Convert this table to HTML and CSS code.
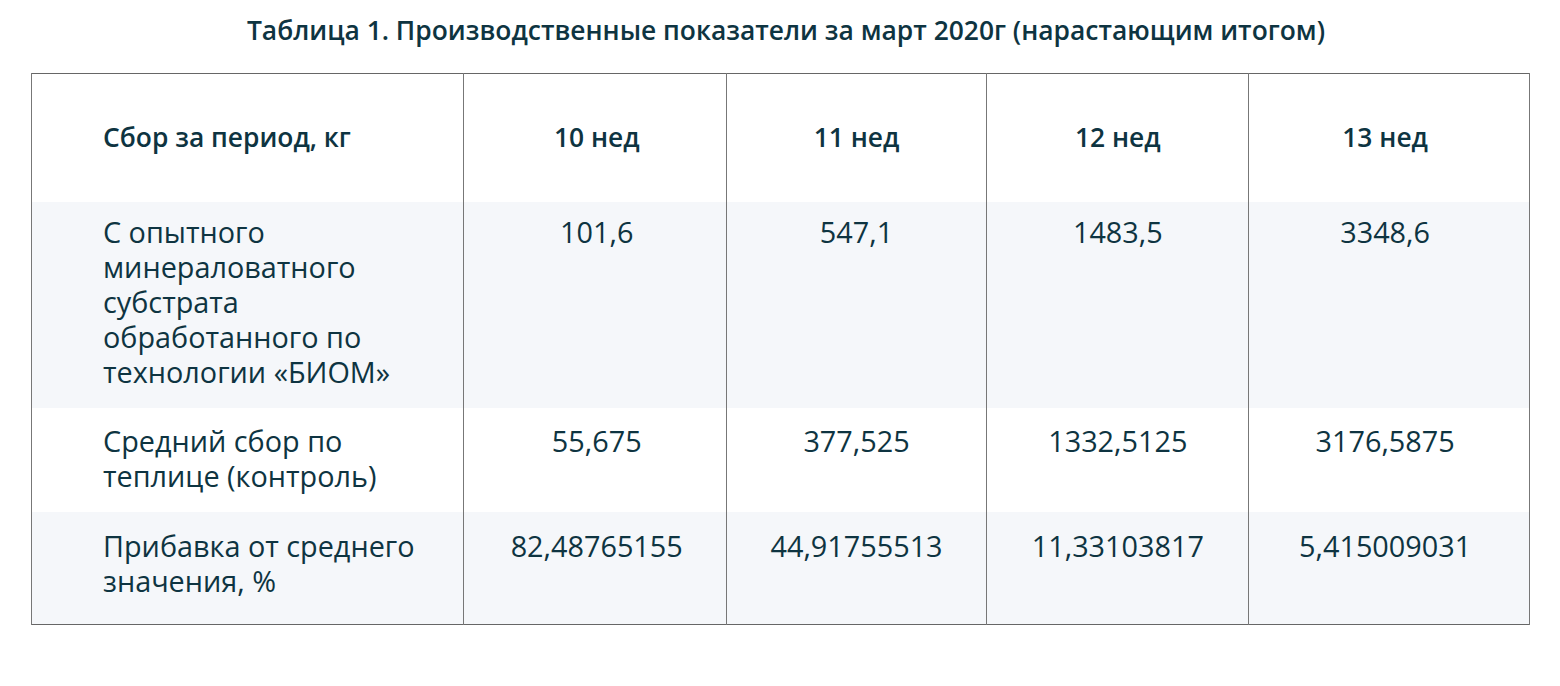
FILE: index.html
```html
<!DOCTYPE html>
<html lang="ru">
<head>
<meta charset="utf-8">
<title>Таблица 1</title>
<link rel="stylesheet" href="styles.css">
</head>
<body>
<div class="page">
  <h2 class="caption">Таблица 1. Производственные показатели за март 2020г (нарастающим итогом)</h2>
  <table class="data">
    <colgroup>
      <col class="c-label">
      <col class="c-10">
      <col class="c-11">
      <col class="c-12">
      <col class="c-13">
    </colgroup>
    <thead>
      <tr>
        <th class="label">Сбор за период, кг</th>
        <th>10 нед</th>
        <th>11 нед</th>
        <th>12 нед</th>
        <th>13 нед</th>
      </tr>
    </thead>
    <tbody>
      <tr class="alt first">
        <td class="label">С опытного минераловатного субстрата обработанного по технологии «БИОМ»</td>
        <td>101,6</td>
        <td>547,1</td>
        <td>1483,5</td>
        <td>3348,6</td>
      </tr>
      <tr class="middle">
        <td class="label">Средний сбор по теплице (контроль)</td>
        <td>55,675</td>
        <td>377,525</td>
        <td>1332,5125</td>
        <td>3176,5875</td>
      </tr>
      <tr class="alt last">
        <td class="label">Прибавка от среднего значения, %</td>
        <td>82,48765155</td>
        <td>44,91755513</td>
        <td>11,33103817</td>
        <td>5,415009031</td>
      </tr>
    </tbody>
  </table>
</div>
</body>
</html>
```

FILE: styles.css
```css
html, body {
  margin: 0;
  padding: 0;
  background: #ffffff;
}

.page {
  padding: 14px 31px 0 31px;
  font-family: "Open Sans", "Liberation Sans", sans-serif;
  color: #0e3441;
}

.caption {
  margin: 0 0 27px 0;
  text-align: center;
  font-size: 26.4px;
  font-weight: 600;
  line-height: 32px;
  padding-left: 12px;
}

.data {
  width: 1499px;
  border-collapse: collapse;
  border: 1px solid #666;
  font-size: 28.8px;
  line-height: 35px;
}

.c-label { width: 432px; }
.c-10 { width: 263px; }
.c-11 { width: 261px; }
.c-12 { width: 262px; }
.c-13 { width: 281px; }

.data th,
.data td {
  border-left: 1px solid #777;
  border-right: 1px solid #777;
  text-align: center;
  vertical-align: top;
  padding: 14px 8px 17px 8px;
  font-weight: 400;
}

.data th:nth-child(2),
.data td:nth-child(2) {
  padding-left: 12px;
  padding-right: 8px;
}

.data th:nth-child(5),
.data td:nth-child(5) {
  padding-left: 4px;
  padding-right: 12px;
}

.data th {
  font-size: 26.4px;
  font-weight: 600;
  vertical-align: middle;
  height: 128px;
  padding-top: 0;
  padding-bottom: 0;
  box-sizing: border-box;
}

.data .label {
  text-align: left;
  padding-left: 71px;
  padding-right: 40px;
}

.data tr.alt td {
  background: #f5f7fa;
}

.data tr.first td {
  padding-top: 12px;
  padding-bottom: 19px;
}

.data tr.middle td {
  padding-top: 15px;
  padding-bottom: 19px;
}

.data tr.last td {
  padding-top: 16px;
  padding-bottom: 26px;
}
```
